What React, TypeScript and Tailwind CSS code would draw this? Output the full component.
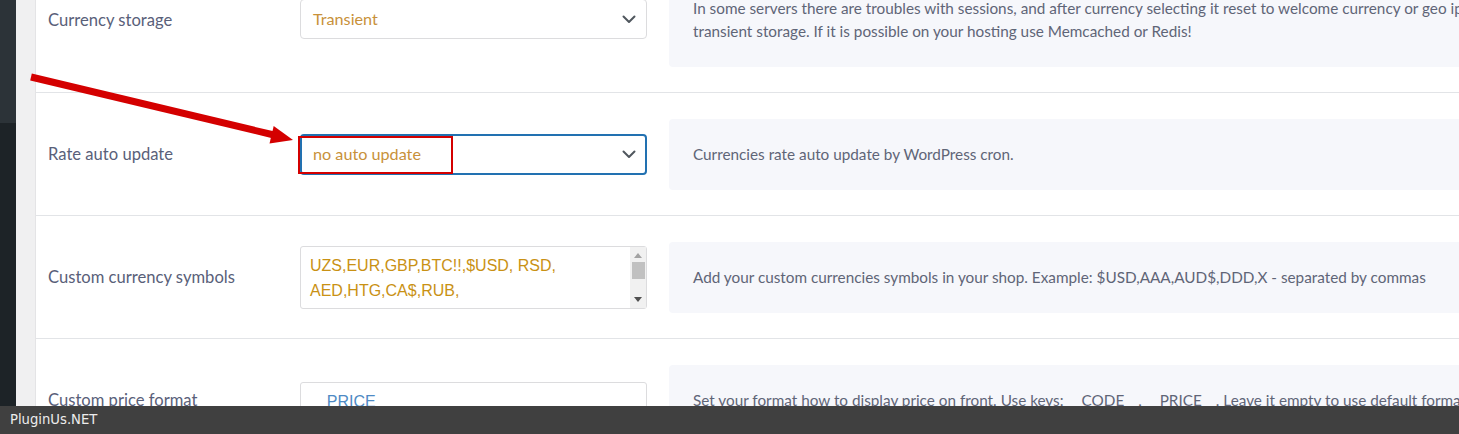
import React from "react";

const labelFont = { fontFamily: "Lato, 'Noto Sans', sans-serif" };

function Chevron() {
  return (
    <svg width="14" height="9" viewBox="0 0 14 9" className="shrink-0">
      <path d="M1.5 1.5 L7 7 L12.5 1.5" fill="none" stroke="#50575e" strokeWidth="2" strokeLinecap="round" strokeLinejoin="round" />
    </svg>
  );
}

function Desc({ children }: { children: React.ReactNode }) {
  return (
    <div
      className="w-[900px] shrink-0 rounded-[4px] bg-[#f6f7fb] px-[24px] py-[24px] text-[15.3px] leading-[23px] text-[#5f6577] whitespace-nowrap"
      style={labelFont}
    >
      {children}
    </div>
  );
}

function Row({ label, control, desc }: { label: string; control: React.ReactNode; desc: React.ReactNode }) {
  return (
    <div className="flex items-center border-b border-[#e2e4e7] pl-[12px] pt-[26px] pb-[25px]">
      <div className="w-[252px] shrink-0 text-[16.6px] text-[#596079]" style={labelFont}>
        {label}
      </div>
      <div className="w-[347px] shrink-0">{control}</div>
      <div className="ml-[22px]">{desc}</div>
    </div>
  );
}

export default function App() {
  return (
    <div className="relative flex h-[434px] w-[1459px] flex-col overflow-hidden bg-white">
      <div className="flex h-[406px] overflow-hidden">
        <div className="flex w-[16px] shrink-0 flex-col">
          <div className="h-[123px] bg-[#2c3338]" />
          <div className="flex-1 bg-[#1d2327]" />
        </div>
        <div className="w-[20px] shrink-0 border-r border-[#e4e4e6] bg-[#f0f0f1]" />
        <div className="flex-1 overflow-hidden">
          <div className="mt-[-53px]">
            <Row
              label="Currency storage"
              control={
                <div className="mt-[-2px] flex h-[40px] items-center justify-between rounded-[4px] border border-[#dcdcde] bg-white pl-[12px] pr-[10px]">
                  <span className="text-[16.2px] text-[#c8913a]" style={labelFont}>Transient</span>
                  <Chevron />
                </div>
              }
              desc={
                <Desc>
                  In some servers there are troubles with sessions, and after currency selecting it reset to welcome currency or geo ip currency. In such case use
                  <br />
                  transient storage. If it is possible on your hosting use Memcached or Redis!
                </Desc>
              }
            />
            <Row
              label="Rate auto update"
              control={
                <div className="relative">
                  <div className="flex h-[41px] items-center justify-between rounded-[4px] border-2 border-[#2271b1] bg-white pl-[11px] pr-[9px]">
                    <span className="text-[16.2px] text-[#c8913a]" style={labelFont}>no auto update</span>
                    <Chevron />
                  </div>
                  <div className="absolute left-[-2px] top-[2px] h-[38px] w-[155px] border-2 border-[#d40000]" />
                </div>
              }
              desc={<Desc>Currencies rate auto update by WordPress cron.</Desc>}
            />
            <Row
              label="Custom currency symbols"
              control={
                <div className="flex h-[63px] rounded-[3px] border border-[#dcdcde] bg-white">
                  <div
                    className="flex-1 pl-[9px] pt-[6px] text-[16px] leading-[25px] text-[#c99114]"
                    style={{ fontFamily: "'Liberation Sans', Arial, sans-serif" }}
                  >
                    UZS,EUR,GBP,BTC!!,$USD, RSD,
                    <br />
                    AED,HTG,CA$,RUB,
                  </div>
                  <div className="flex w-[16px] flex-col items-center justify-between bg-[#f1f1f1] py-[6px]">
                    <div className="flex flex-col items-center gap-[4px]">
                      <svg width="8" height="5" viewBox="0 0 8 5"><path d="M0 5 L4 0 L8 5Z" fill="#a3a3a3" /></svg>
                      <div className="h-[17px] w-[13px] bg-[#c1c1c1]" />
                    </div>
                    <svg width="8" height="5" viewBox="0 0 8 5"><path d="M0 0 L8 0 L4 5Z" fill="#505050" /></svg>
                  </div>
                </div>
              }
              desc={<Desc>Add your custom currencies symbols in your shop. Example: $USD,AAA,AUD$,DDD,X - separated by commas</Desc>}
            />
            <Row
              label="Custom price format"
              control={
                <div className="mt-[2px] flex h-[40px] items-center rounded-[3px] border border-[#dcdcde] bg-white pl-[8px]">
                  <span
                    className="text-[16px] text-[#4e8ac4]"
                    style={{ fontFamily: "'Liberation Sans', Arial, sans-serif" }}
                  >
                    __PRICE__
                  </span>
                </div>
              }
              desc={<Desc>Set your format how to display price on front. Use keys: __CODE__, __PRICE__. Leave it empty to use default format. Example: __PRICE__ (__CODE__)</Desc>}
            />
          </div>
        </div>
      </div>
      <div
        className="flex h-[28px] shrink-0 items-center bg-[#404040] pl-[10px] text-[13.2px] text-[#ececec]"
        style={{ fontFamily: "'DejaVu Sans', sans-serif" }}
      >
        PluginUs.NET
      </div>
      <svg className="pointer-events-none absolute left-0 top-0" width="1459" height="434">
        <line x1="31" y1="77" x2="274" y2="135" stroke="#d40000" strokeWidth="7" />
        <polygon points="293,140 273.7,126.1 269.5,143.6" fill="#d40000" />
      </svg>
    </div>
  );
}
